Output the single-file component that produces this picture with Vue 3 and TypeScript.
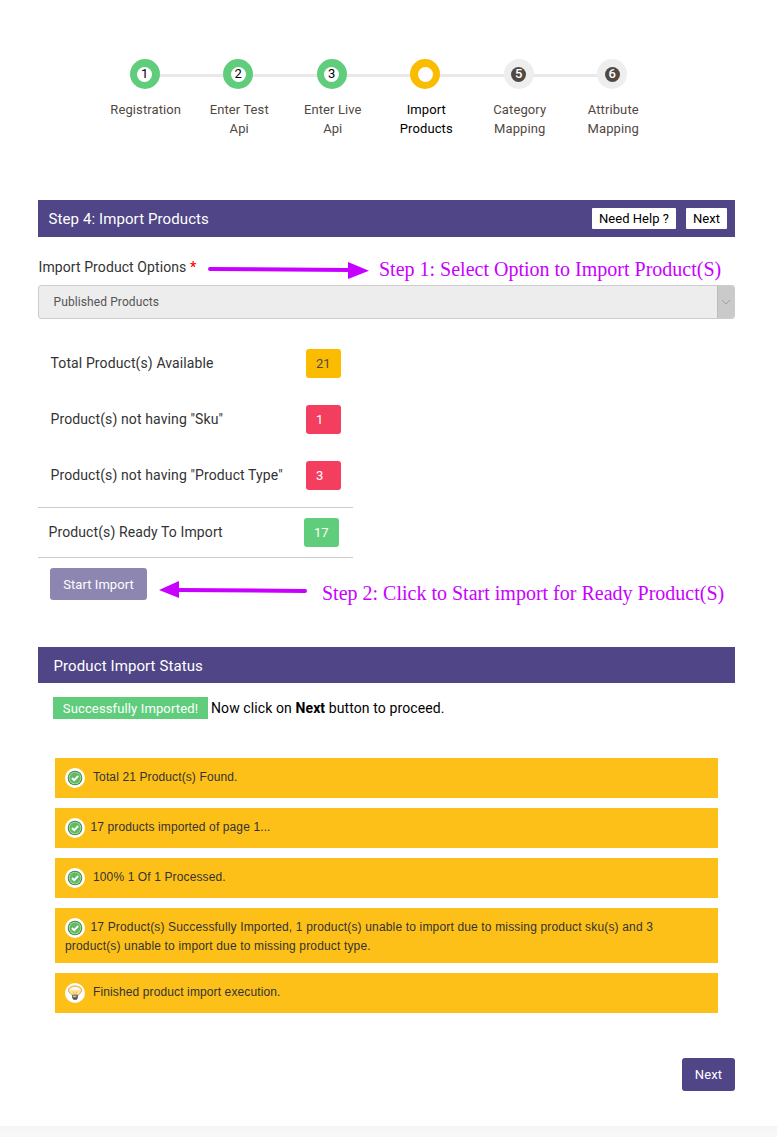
<script setup lang="ts">
interface Step { n: number; label: string[]; state: 'done' | 'current' | 'todo' }
interface Stat { label: string; value: number; tone: 'amber' | 'red' }
interface LogEntry { lines: string[]; icon: 'check' | 'bulb'; tight?: boolean }

const steps: Step[] = [
  { n: 1, label: ['Registration'], state: 'done' },
  { n: 2, label: ['Enter Test', 'Api'], state: 'done' },
  { n: 3, label: ['Enter Live', 'Api'], state: 'done' },
  { n: 4, label: ['Import', 'Products'], state: 'current' },
  { n: 5, label: ['Category', 'Mapping'], state: 'todo' },
  { n: 6, label: ['Attribute', 'Mapping'], state: 'todo' },
]

const stats: Stat[] = [
  { label: 'Total Product(s) Available', value: 21, tone: 'amber' },
  { label: 'Product(s) not having "Sku"', value: 1, tone: 'red' },
  { label: 'Product(s) not having "Product Type"', value: 3, tone: 'red' },
]

const log: LogEntry[] = [
  { lines: ['Total 21 Product(s) Found.'], icon: 'check' },
  { lines: ['17 products imported of page 1...'], icon: 'check', tight: true },
  { lines: ['100% 1 Of 1 Processed.'], icon: 'check' },
  {
    lines: [
      '17 Product(s) Successfully Imported, 1 product(s) unable to import due to missing product sku(s) and 3',
      'product(s) unable to import due to missing product type.',
    ],
    icon: 'check',
    tight: true,
  },
  { lines: ['Finished product import execution.'], icon: 'bulb' },
]
</script>

<template>
  <div class="page">
    <ol class="steps">
      <li v-for="s in steps" :key="s.n" class="step" :class="s.state">
        <span class="ring"><span class="dot">{{ s.state === 'current' ? '' : s.n }}</span></span>
        <span class="step-label">
          <span v-for="l in s.label" :key="l">{{ l }}</span>
        </span>
      </li>
    </ol>

    <header class="bar">
      <h1>Step 4: Import Products</h1>
      <div class="bar-actions">
        <button class="mini help">Need Help ?</button>
        <button class="mini">Next</button>
      </div>
    </header>

    <div class="option-row">
      <label class="option-label">Import Product Options <b>*</b></label>
      <svg class="arrow-right" width="164" height="20" viewBox="0 0 164 20">
        <path d="M3 8 L142 9" stroke="#c800ff" stroke-width="4" stroke-linecap="round" />
        <path d="M141 1 L162 9.7 L141 18 Z" fill="#c800ff" />
      </svg>
      <span class="note note-one">Step 1: Select Option to Import Product(S)</span>
    </div>

    <div class="select">
      <span class="select-value">Published Products</span>
      <span class="select-toggle">
        <svg width="10" height="6" viewBox="0 0 10 6"><path d="M1 1 L5 5 L9 1" fill="none" stroke="#a2a2a2" /></svg>
      </span>
    </div>

    <div class="stats">
      <div v-for="s in stats" :key="s.label" class="stat">
        <span class="stat-label">{{ s.label }}</span>
        <span class="count" :class="s.tone">{{ s.value }}</span>
      </div>
      <div class="stat ready">
        <span class="stat-label">Product(s) Ready To Import</span>
        <span class="count green">17</span>
      </div>
    </div>

    <div class="start-row">
      <button class="start">Start Import</button>
      <svg class="arrow-left" width="150" height="20" viewBox="0 0 150 20">
        <path d="M18 10 L146 11" stroke="#c800ff" stroke-width="4" stroke-linecap="round" />
        <path d="M0 10 L20 1 L20 18 Z" fill="#c800ff" />
      </svg>
      <span class="note note-two">Step 2: Click to Start import for Ready Product(S)</span>
    </div>

    <h2 class="bar status-bar"><span>Product Import Status</span></h2>
    <p class="result">
      <span class="flag">Successfully Imported!</span>
      <span class="hint">Now click on <strong>Next</strong> button to proceed.</span>
    </p>

    <ul class="log">
      <li v-for="(e, i) in log" :key="i" class="entry" :class="{ tight: e.tight, double: e.lines.length > 1 }">
        <svg v-if="e.icon === 'check'" class="entry-icon" width="20" height="20" viewBox="0 0 20 20">
          <circle cx="10" cy="10" r="10" fill="#fff" />
          <circle cx="10" cy="10" r="7.3" fill="#3c8b43" />
          <circle cx="10" cy="10" r="6.3" fill="#a8dba5" />
          <circle cx="10" cy="10" r="5.4" fill="#62b963" />
          <path d="M6.9 10 L9.2 12.1 L13.2 8" fill="none" stroke="#fff" stroke-width="1.9" />
        </svg>
        <svg v-else class="entry-icon" width="20" height="20" viewBox="0 0 20 20">
          <circle cx="10" cy="10" r="10" fill="#fff" />
          <path d="M7.4 12.7 C7.2 11 3.4 10.2 3.4 7.4 C3.4 4.6 6.4 3 10 3 C13.8 3 16.7 4.7 16.7 7.5 C16.7 10.3 13 11 12.7 12.7 Z" fill="#ffe3a0" stroke="#dd9a4c" stroke-width=".9" />
          <path d="M5.4 6.8 C6 4.8 8 4 10 4 C12 4 14.4 5 14.8 7 Z" fill="#fffaf0" />
          <path d="M8.3 8.4 L9.3 12 M11.8 8.4 L10.8 12" fill="none" stroke="#f0b92c" stroke-width="1" />
          <path d="M7 11.8 H13 V15 L11.7 16.6 H8.5 L7 15 Z" fill="#6e6e6e" />
          <path d="M8 13.3 H11" stroke="#ddd" />
          <path d="M8.3 16 H11.9" stroke="#333" />
        </svg>
        <span v-for="l in e.lines" :key="l" class="entry-line">{{ l }}</span>
      </li>
    </ul>

    <footer class="actions"><button class="next">Next</button></footer>
    <div class="page-end"></div>
  </div>
</template>

<style>
body { margin: 0; background: #fff; }
</style>

<style scoped>
* { box-sizing: border-box; }
.page {
  width: 777px;
  height: 1137px;
  overflow: hidden;
  display: flex;
  flex-direction: column;
  background: #fff;
  color: #333;
  font-family: Roboto, sans-serif;
}
button { border: 0; font-family: inherit; padding: 0; white-space: nowrap; }
.steps {
  display: flex;
  list-style: none;
  margin: 59px 0 0 98px;
  padding: 0;
  height: 141px;
  flex: none;
}
.step {
  width: 93.5px;
  display: flex;
  flex-direction: column;
  align-items: center;
  background: linear-gradient(#e9e9e9, #e9e9e9) 0 15px / 100% 3px no-repeat;
}
.step:first-child { background-size: 50% 3px; background-position: 100% 15px; }
.step:last-child { background-size: 50% 3px; }
.ring {
  width: 30px;
  height: 30px;
  border-radius: 50%;
  background: #5fcd7c;
  display: flex;
  align-items: center;
  justify-content: center;
}
.dot {
  width: 15px;
  height: 15px;
  border-radius: 50%;
  background: #fff;
  color: #000;
  font-size: 13px;
  line-height: 14px;
  text-align: center;
}
.current .ring { background: #fbbc00; }
.todo .ring { background: #eee; }
.todo .dot { background: #524843; color: #fff; font-weight: 500; }
.step-label {
  display: flex;
  flex-direction: column;
  align-items: center;
  margin: 11px 0 0 2px;
  font-size: 13px;
  line-height: 19px;
  letter-spacing: .1px;
  color: #524843;
}
.current .step-label { color: #000; }
.bar {
  margin: 0 42px 0 38px;
  height: 37px;
  flex: none;
  display: flex;
  align-items: center;
  justify-content: space-between;
  padding: 0 8px 0 10.5px;
  background: #4f4587;
  color: #fff;
}
h1, h2 { margin: 0; font-size: 15px; font-weight: 400; letter-spacing: .1px; }
.bar-actions { display: flex; gap: 10px; }
.mini {
  width: 41px;
  height: 21px;
  border-radius: 1px;
  background: #fff;
  color: #000;
  font-size: 13px;
  letter-spacing: .04px;
}
.help { width: 84px; }
.option-row { display: flex; align-items: center; height: 48px; margin-left: 38.5px; padding-top: 12px; flex: none; }
.option-label { width: 168.5px; flex: none; font-size: 14px; letter-spacing: .09px; white-space: nowrap; }
.option-label b { color: #f00; font-weight: 500; }
.arrow-right { flex: none; margin-top: 7px; }
.note {
  font-family: "Liberation Serif", serif;
  font-size: 20px;
  line-height: 22px;
  color: #c800ff;
  white-space: nowrap;
}
.note-one { margin: 3px 0 0 8px; }
.select {
  height: 34px;
  flex: none;
  margin: 0 42px 0 38px;
  border: 1px solid #ccc;
  border-radius: 3px;
  background: #ededed;
  display: flex;
  justify-content: space-between;
  overflow: hidden;
}
.select-value { padding-left: 14.5px; font-size: 12px; line-height: 32px; letter-spacing: .1px; color: #555; }
.select-toggle {
  width: 17px;
  background: #cacaca;
  border-left: 1px solid #bbb;
  display: flex;
  align-items: center;
  justify-content: center;
}
.stats { width: 315px; margin: 16px 0 0 38px; flex: none; }
.stat { height: 56px; padding: 0 12px 0 12.5px; display: flex; align-items: center; justify-content: space-between; }
.stat:nth-child(3) { height: 60px; padding-bottom: 4px; }
.stat-label { font-size: 14px; letter-spacing: .11px; white-space: nowrap; }
.count {
  width: 35px;
  height: 29px;
  padding-left: 10px;
  border-radius: 3px;
  color: #fff;
  font-size: 13px;
  line-height: 29px;
}
.amber { background: #fbbc00; color: #524843; }
.red { background: #f43e60; }
.green { background: #5fcd7c; }
.ready { height: 51px; border-top: 1px solid #ccc; border-bottom: 1px solid #ccc; padding: 0 14px 0 10.5px; }
.ready .stat-label { padding-bottom: 2px; }
.start-row { height: 32px; margin: 10px 0 0 50px; display: flex; align-items: center; flex: none; }
.start { width: 97px; height: 32px; border-radius: 3px; background: #8d86b1; color: #fff; font-size: 13px; letter-spacing: .05px; }
.arrow-left { margin: 11px 0 0 12px; flex: none; }
.note-two { margin: 17px 0 0 13px; }
.status-bar { margin-top: 47px; height: 36px; padding: 2px 0 0 15.5px; }
.result { display: flex; align-items: center; height: 22px; margin: 14px 0 0 53px; flex: none; color: #000; font-size: 14px; }
.flag { width: 155px; height: 22px; background: #5fcd7c; color: #fff; font-size: 13px; line-height: 23px; text-align: center; letter-spacing: .13px; }
.hint { margin-left: 3px; white-space: nowrap; letter-spacing: .1px; }
.log {
  list-style: none;
  margin: 39px 59px 0 55px;
  padding: 0;
  display: flex;
  flex-direction: column;
  gap: 10px;
  flex: none;
  font-family: "Liberation Sans", Arial, sans-serif;
  font-size: 12px;
  line-height: 19px;
}
.entry { height: 40px; padding: 10px 10px 0; background: #fdc018; }
.double { height: 55px; }
.entry-icon { float: left; margin: 0 8px -6px 0; }
.tight .entry-icon { margin-right: 5.5px; }
.entry-line { display: block; white-space: nowrap; letter-spacing: .12px; }
.double .entry-line { letter-spacing: .16px; }
.actions { display: flex; justify-content: flex-end; margin: 45px 42px 0 0; flex: none; }
.next { width: 53px; height: 33px; border-radius: 3px; background: #4f4587; color: #fff; font-size: 13px; letter-spacing: .1px; }
.page-end { margin-top: auto; height: 11px; flex: none; background: linear-gradient(#f5f5f5, #f8f8f8); }
</style>
